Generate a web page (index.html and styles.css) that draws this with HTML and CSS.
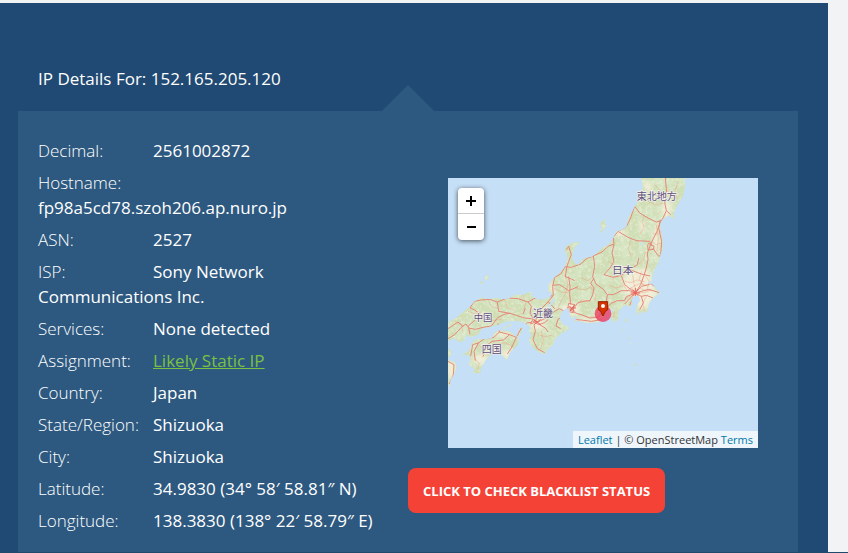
FILE: index.html
```html
<!DOCTYPE html>
<html lang="en">
<head>
<meta charset="utf-8">
<meta name="viewport" content="width=device-width, initial-scale=1">
<title>IP Details</title>
<link rel="stylesheet" href="styles.css">
</head>
<body>
<main class="details">
  <h1 class="title">IP Details For: 152.165.205.120</h1>
  <section class="panel">
    <div class="info">
      <p class="row"><span class="label">Decimal:</span><span>2561002872</span></p>
      <p class="row"><span class="label">Hostname:</span><span> fp98a5cd78.szoh206.ap.nuro.jp</span></p>
      <p class="row"><span class="label">ASN:</span><span>2527</span></p>
      <p class="row"><span class="label">ISP:</span><span>Sony Network Communications Inc.</span></p>
      <p class="row"><span class="label">Services:</span><span>None detected</span></p>
      <p class="row"><span class="label">Assignment:</span><a class="static" href="#">Likely Static IP</a></p>
      <p class="row"><span class="label">Country:</span><span>Japan</span></p>
      <p class="row"><span class="label">State/Region:</span><span>Shizuoka</span></p>
      <p class="row"><span class="label">City:</span><span>Shizuoka</span></p>
      <p class="row"><span class="label">Latitude:</span><span>34.9830 (34° 58′ 58.81″ N)</span></p>
      <p class="row"><span class="label">Longitude:</span><span>138.3830 (138° 22′ 58.79″ E)</span></p>
    </div>
    <div class="side">
      <div class="map">
        <svg class="tiles" viewBox="0 0 930 810" preserveAspectRatio="xMidYMid slice" role="img" aria-label="Map of Japan">
          <defs>
            <path id="land" d="M580 0L584 28 577 58 561 85 550 105 540 120 536 146 520 156 505 162 492 188 480 202 465 208 450 222 432 236 412 240 400 247 392 260 381 256 373 243 374 226 380 208 394 196 390 191 372 195 353 206 350 218 358 232 358 246 351 264 336 284 320 297 307 313 300 326 301 340 313 349 303 360 282 365 265 363 249 352 252 342 240 344 222 351 200 350 182 362 160 364 150 360 112 364 104 358 80 370 64 388 42 405 28 417 12 426 0 434V489L18 481 34 492 50 487 54 472 70 478 90 470 101 452 120 448 150 440 170 432 187 429 215 430 233 436 246 447 243 460 251 472 243 485 248 500 262 515 280 526 291 528 301 510 315 501 321 483 340 466 362 455 360 444 344 440 335 422 340 403 352 392 364 390 366 412 372 422 382 414 388 422 375 430 391 429 420 435 455 432 464 418 476 401 486 392 496 394 489 408 492 425 501 433 511 420 512 400 524 386 540 380 545 390 552 377 550 365 558 354 572 354 577 367 569 379 564 402 582 404 600 398 602 378 615 361 635 345 622 330 612 316 611 302 619 275 633 250 636 235 644 212 644 190 640 165 636 140 641 126 660 114 674 118 680 126 678 105 690 78 704 56 712 22 710 0Z
              M75 490L90 483 112 484 132 480 140 463 155 457 184 460 198 472 213 482 209 500 185 524 178 545 160 531 148 524 130 528 111 550 98 574 97 586 75 585 79 571 62 561 67 543 62 530 45 530 30 537 62 518Z
              M0 510L10 522 8 532 0 540ZM0 547L19 551 26 567 18 590 8 602 6 618 0 627Z
              M456 136L473 124 470 137 476 142 465 158 454 166 462 150Z
              M204 476L218 448 224 452 215 472Z
              M110 296L117 292 123 298 119 306 111 304ZM95 315L101 309 106 312 101 319Z
              M531 423L538 422 539 430 532 431ZM522 456L528 452 527 459ZM540 478L547 478 545 483ZM546 495L551 496 549 500ZM557 556L567 560 564 564 558 561ZM558 612L561 612 560 615Z
              M562 405L574 405 569 411ZM165 448L174 445 176 450 168 453ZM180 441L190 437 191 443 183 446Z"/>
            <clipPath id="coast"><use href="#land"/></clipPath>
            <filter id="fields" x="0" y="0" width="100%" height="100%">
              <feTurbulence type="fractalNoise" baseFrequency="0.11" numOctaves="3" seed="8"/>
              <feColorMatrix values="0 0 0 0 0.96  0 0 0 0 0.93  0 0 0 0 0.82  5 0 0 0 -2.5"/>
            </filter>
            <filter id="woods" x="0" y="0" width="100%" height="100%">
              <feTurbulence type="fractalNoise" baseFrequency="0.035" numOctaves="3" seed="3"/>
              <feColorMatrix values="0 0 0 0 0.70  0 0 0 0 0.82  0 0 0 0 0.61  0 4 0 0 -1.6"/>
            </filter>
            <filter id="soft"><feGaussianBlur stdDeviation="7"/></filter>
          </defs>
          <rect class="sea" width="930" height="810"/>
          <use class="ground" href="#land"/>
          <g clip-path="url(#coast)">
            <rect width="930" height="810" filter="url(#woods)" opacity=".6"/>
            <rect width="930" height="810" filter="url(#fields)" opacity=".35"/>
            <g class="plains" filter="url(#soft)">
              <path d="M548 275L600 270 610 310 625 345 600 390 570 395 555 360 525 345 525 300Z"/>
              <ellipse cx="368" cy="393" rx="28" ry="18"/><ellipse cx="270" cy="438" rx="24" ry="18"/>
              <ellipse cx="655" cy="95" rx="14" ry="26"/><ellipse cx="515" cy="165" rx="24" ry="9"/>
              <ellipse cx="98" cy="543" rx="24" ry="14"/><ellipse cx="178" cy="528" rx="20" ry="14"/><ellipse cx="167" cy="469" rx="32" ry="8"/>
              <ellipse cx="625" cy="185" rx="9" ry="48"/><ellipse cx="583" cy="145" rx="7" ry="20"/>
              <ellipse cx="10" cy="574" rx="14" ry="30"/><ellipse cx="600" cy="25" rx="10" ry="16"/>
              <ellipse cx="420" cy="428" rx="40" ry="8"/><ellipse cx="311" cy="330" rx="8" ry="18"/>
            </g>
            <g class="minor">
              <path d="M590 110l-8 20 6 18-12 22M610 190l14 10 18-6M625 140l6 40-4 40M548 190l-8 22 10 24M480 250l20 12 4 24-10 20M430 330l14 20-4 22M480 320l24 10 20-6M350 290l10 30-8 30M318 330l24 14 20-2M120 364l10 22 20 6M170 365l8 24 22 8M225 352l8 22-6 22M60 400l22 8 18-6M20 430l20 10 4 20M110 420l22 8 30-4M280 460l6 30-10 24M270 470l20 6 22-4M90 500l20 14-6 24M140 500l30-6 24 10M80 540l14 16-6 20M384 380l20-14 24 4M400 410l20 8 20-2M590 290l14 20-6 22M530 310l18 4 20-8 22 6M536 340l22-16 20-8 20 8M554 290l4 28 8 24M590 400l-6-24 12-22M575 330l18 8 24 0M530 366l14-10 16-12M620 20l14 14-6 24M690 10l-8 30 6 24M600 70l22 10 24-4M660 50l14 16M500 400l-4 20M570 260l16-14 6-24M640 160l-14 10-12-4M400 300l20 8 16-12M380 330l30 6 22-10M330 390l10-22 10-18M525 320l12 16M580 280l-6 24 12 18M548 328l16 16 26 0 20-10M556 372l-2-16"/>
            </g>
            <g class="roads">
              <path d="M578 0L574 25 584 48M652 0L656 42 650 72 655 98 646 118 635 138 628 158 614 186 606 205 598 225 600 245 595 270 588 292 578 320 562 345M655 98L668 110M637 125L632 150 641 190 638 230M560 85L575 105 600 120 625 132 646 126M560 85L547 122 535 146 510 160 496 178 498 198 480 205 462 222 440 232 415 242 398 258 370 268 352 266 338 288 320 298 314 325 316 352 302 370 282 390 268 410 262 432"/>
              <path d="M510 160L540 178 565 188 605 190 612 205M498 198L492 225 498 250 486 270 468 290M600 196L618 204 617 214 600 216 599 200M614 210L632 235 638 232M436 232L440 265 434 296 444 318 466 334 478 350 496 350 520 338 545 338 562 345M438 300L428 316 438 330 434 350 426 368 408 370 390 374 376 392 362 396"/>
              <path d="M355 215L362 205 370 230 362 250 356 268 352 296 368 302 380 308M362 296L366 325 365 350 368 380M314 322L335 320 362 338 390 326M468 290L495 298 520 292 545 275 580 288 606 294M520 292L530 320 562 345 580 325 610 318 620 326M545 275L568 260 572 240M562 345L535 356 530 368 508 368 490 376 466 398M478 350L475 372 480 386M562 345L545 362 530 378M562 345L580 355 596 352 615 360M580 355L586 375 575 395M562 345L580 340 602 334 634 344M545 382L554 360"/>
              <path d="M466 400L450 418 425 420 405 412 386 406 366 396 350 400 334 392 320 400 305 412 290 422 270 432 250 422 230 420 205 412 186 406 172 408 150 418 130 444 105 448 82 454 62 450 54 438 42 446 20 470 0 482M372 424L400 426 430 430 462 425M375 392L380 380 362 376 358 400 376 404 376 384M350 400L346 415 330 424 324 444 338 452M262 432L248 438 252 428 272 440 290 434 300 425M258 440L262 460 255 485 268 512 290 524M275 440L292 450 300 462"/>
              <path d="M78 370L100 366 125 364 148 372 178 360 210 362 240 372 262 360 288 362 314 352M148 372L152 400 186 406M78 370L66 390 80 396 98 410 60 445M240 372L250 385 246 405 262 432M150 436L154 462 138 478 110 482 92 494 78 520 82 548M154 462L185 470 205 478 190 510 178 528M205 478L220 450 238 434 250 434M185 470L166 486 132 490 112 505 106 535M62 450L66 470M46 446L30 432 0 452M0 550L18 560 16 590 4 618M94 494L74 500 68 535M176 362L188 348M300 370L320 392M225 408L232 390"/>
            </g>
            <path class="capital" d="M554 335l16 18M570 334l-16 20M548 345h28M562 330v30M364 384l16 16M380 380l-14 20M358 390h26M258 426l20 14M278 424l-20 16"/>
          </g>
          <path class="water" d="M316 360L321 368 312 378 304 391 299 388 308 375ZM600 312l8-4 4 6-6 8ZM576 193l8 2-2 6-6-2Z"/>
          <g class="places">
            <text x="626" y="65" font-size="30">東北地方</text>
            <text x="524" y="289" font-size="32">日本</text>
            <text x="105" y="430" font-size="28">中国</text>
            <text x="285" y="417" font-size="30">近畿</text>
            <text x="131" y="524" font-size="30">四国</text>
          </g>
          <circle class="spot" cx="465" cy="407" r="25"/>
          <path class="pin" d="M451 371H479V395L472 400 465 414 458 400 451 395Z"/>
          <circle class="hole" cx="465" cy="384" r="6"/>
        </svg>
        <div class="zoom">
          <button type="button" aria-label="Zoom in"><svg viewBox="0 0 12 12"><path d="M1 6H11M6 1V11"/></svg></button>
          <button type="button" aria-label="Zoom out"><svg viewBox="0 0 12 12"><path d="M2 6H11"/></svg></button>
        </div>
        <div class="credit"><a href="#">Leaflet</a> | © OpenStreetMap <a href="#">Terms</a></div>
      </div>
      <button class="check" type="button">Click to check blacklist status</button>
    </div>
  </section>
</main>
</body>
</html>
```
FILE: styles.css
```css
* { box-sizing: border-box; }

body {
  display: flex;
  flex-direction: column;
  min-height: 100vh;
  margin: 0;
  padding-top: 3px;
  border-bottom: 1px solid #1f4a6e;
  background: #f1f3f5;
  color: #fff;
  font: 17px/25px "Open Sans", "Noto Sans", sans-serif;
}

.details {
  flex: 1;
  display: flex;
  flex-direction: column;
  margin-right: 20px;
  padding: 63px 30px 0 18px;
  background: #204a73;
}

.title {
  margin: 0 0 20px;
  padding-left: 20px;
  font-size: 17px;
  font-weight: 400;
}

.panel {
  position: relative;
  flex: 1;
  display: grid;
  grid-template-columns: 1fr 1fr;
  padding-bottom: 16px;
  background: #2d5980;
}

.panel::before {
  content: "";
  position: absolute;
  bottom: 100%;
  left: 50%;
  width: 52px;
  height: 26px;
  margin-left: -26px;
  background: #2d5980;
  clip-path: polygon(50% 0, 100% 100%, 0 100%);
}

.info {
  display: flex;
  flex-direction: column;
  gap: 7px;
  padding: 27px 20px 0;
}

.row { margin: 0; font-weight: 500; }

.label {
  display: inline-block;
  width: 115px;
  font-weight: 300;
}

.static { color: #7ac143; font-weight: 400; }

.side { padding-top: 67px; }

.map {
  position: relative;
  height: 270px;
  margin: 0 40px 20px;
  overflow: hidden;
}

.tiles { display: block; width: 100%; height: 100%; }
.sea, .water { fill: #c5dff6; }
.ground { fill: #cfdeb5; }
.plains { fill: #f8f1df; opacity: .8; }
.minor, .roads, .capital { fill: none; stroke-linejoin: round; }
.minor { stroke: #eda184; stroke-width: 2; opacity: .7; }
.roads { stroke: #e5887a; stroke-width: 3; }
.capital { stroke: #e6665e; stroke-width: 3; }

.places {
  fill: #5d5078;
  stroke: #f4f1ee;
  stroke-width: 4px;
  paint-order: stroke;
  text-anchor: middle;
  font-family: "Noto Sans CJK JP", sans-serif;
}

.spot { fill: #ee3058; opacity: .75; }
.pin { fill: #d63301; stroke: #952000; stroke-width: 3; }
.hole { fill: #fff; }

.zoom {
  position: absolute;
  top: 10px;
  left: 10px;
  width: 26px;
  border-radius: 4px;
  background: #fff;
  box-shadow: 0 1px 5px rgba(0, 0, 0, .65);
}

.zoom button {
  display: grid;
  place-items: center;
  width: 26px;
  height: 26px;
  padding: 0;
  border: 0;
  background: none;
}

.zoom button:first-child { border-bottom: 1px solid #ccc; }
.zoom svg { width: 12px; height: 12px; stroke: #000; stroke-width: 2; }

.credit {
  position: absolute;
  right: 0;
  bottom: 0;
  padding: 0 5px;
  background: rgba(255, 255, 255, .7);
  color: #333;
  font-size: 11px;
  line-height: 17px;
  white-space: nowrap;
}

.credit a { color: #0078a8; text-decoration: none; }

.check {
  height: 45px;
  padding: 0 15px;
  border: 0;
  border-radius: 8px;
  background: #f44336;
  color: #fff;
  font: 700 13px/20px "Open Sans", sans-serif;
  text-transform: uppercase;
}
```
